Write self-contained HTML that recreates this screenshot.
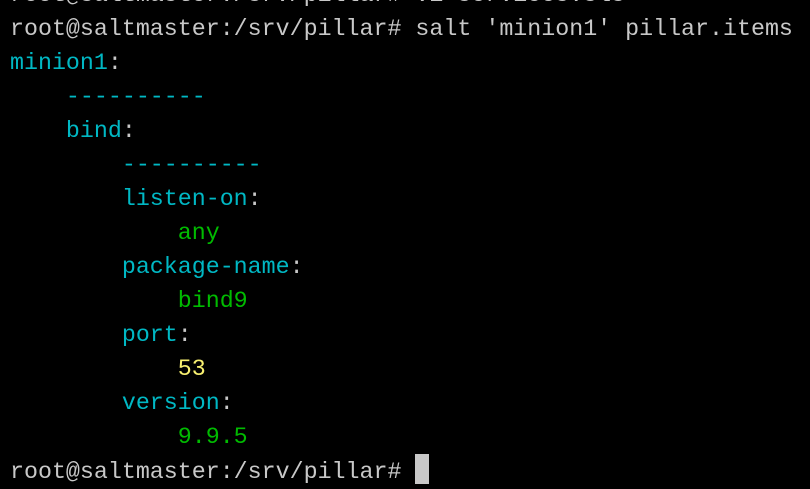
<!DOCTYPE html>
<html><head><style>
html,body{margin:0;padding:0;background:#000;width:810px;height:460px;overflow:hidden}
pre{position:absolute;left:10px;top:-22px;margin:0;font-family:"Liberation Mono",monospace;font-size:23.3px;line-height:34px;color:#c8c8c8;white-space:pre}
.c{color:#00b8c4}.g{color:#00bb00}.y{color:#f8f070}
.cur{display:inline-block;width:14px;height:30px;background:#c8c8c8;vertical-align:-6px}
</style></head><body>
<pre>root@saltmaster:/srv/pillar# vi services.sls
root@saltmaster:/srv/pillar# salt 'minion1' pillar.items
<span class="c">minion1</span>:
    <span class="c">----------</span>
    <span class="c">bind</span>:
        <span class="c">----------</span>
        <span class="c">listen-on</span>:
            <span class="g">any</span>
        <span class="c">package-name</span>:
            <span class="g">bind9</span>
        <span class="c">port</span>:
            <span class="y">53</span>
        <span class="c">version</span>:
            <span class="g">9.9.5</span>
root@saltmaster:/srv/pillar# <span class="cur"></span></pre>
</body></html>
